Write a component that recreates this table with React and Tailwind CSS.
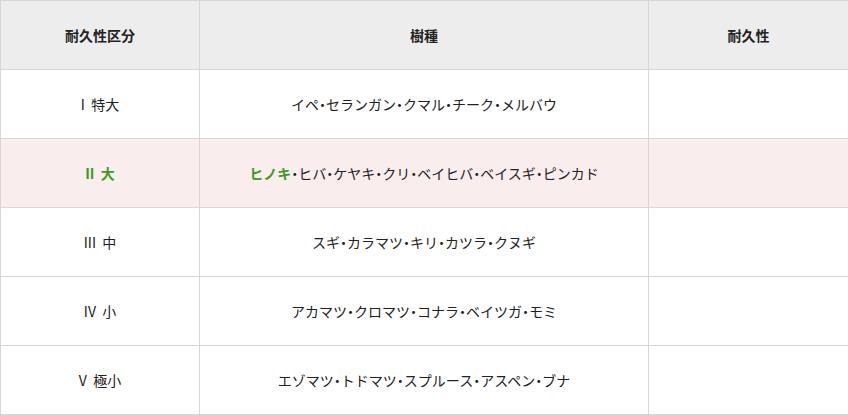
const rows = [
  { grade: 'I', label: '特大', woods: ['イペ', 'セランガン', 'クマル', 'チーク', 'メルバウ'] },
  { grade: 'II', label: '大', woods: ['ヒノキ', 'ヒバ', 'ケヤキ', 'クリ', 'ベイヒバ', 'ベイスギ', 'ピンカド'], active: true },
  { grade: 'III', label: '中', woods: ['スギ', 'カラマツ', 'キリ', 'カツラ', 'クヌギ'] },
  { grade: 'IV', label: '小', woods: ['アカマツ', 'クロマツ', 'コナラ', 'ベイツガ', 'モミ'] },
  { grade: 'V', label: '極小', woods: ['エゾマツ', 'トドマツ', 'スプルース', 'アスペン', 'ブナ'] }
]

export default function App() {
  return (
    <div className="w-[848px] h-[415px] bg-white" style={{ fontFamily: '"Noto Sans CJK JP", "Noto Sans", sans-serif' }}>
      <table className="w-[848px] border-collapse table-fixed text-[14px] text-[#222]">
        <colgroup>
          <col className="w-[199px]" />
          <col className="w-[449px]" />
          <col className="w-[200px]" />
        </colgroup>
        <thead>
          <tr className="h-[69px] bg-[#ededed]">
            <th className="border border-[#d6d6d6] font-bold text-center">耐久性区分</th>
            <th className="border border-[#d6d6d6] font-bold text-center">樹種</th>
            <th className="border border-[#d6d6d6] font-bold text-center">耐久性</th>
          </tr>
        </thead>
        <tbody>
          {rows.map((r) => (
            <tr key={r.grade} className={r.active ? 'h-[69px] bg-[#f9eded]' : 'h-[69px] bg-white'}>
              <td className={r.active ? 'border border-[#d6d6d6] text-center font-bold text-[#3a9c1c]' : 'border border-[#d6d6d6] text-center'}>
                {r.grade}&nbsp;&nbsp;{r.label}
              </td>
              <td className="border border-[#d6d6d6] text-center">
                {r.woods.map((w, i) => (
                  <span key={w}>
                    {i > 0 && <span className="[font-feature-settings:'palt']">・</span>}
                    {r.active && i === 0 ? <span className="font-bold text-[#3a9c1c]">{w}</span> : w}
                  </span>
                ))}
              </td>
              <td className="border border-[#d6d6d6]"></td>
            </tr>
          ))}
        </tbody>
      </table>
    </div>
  )
}
